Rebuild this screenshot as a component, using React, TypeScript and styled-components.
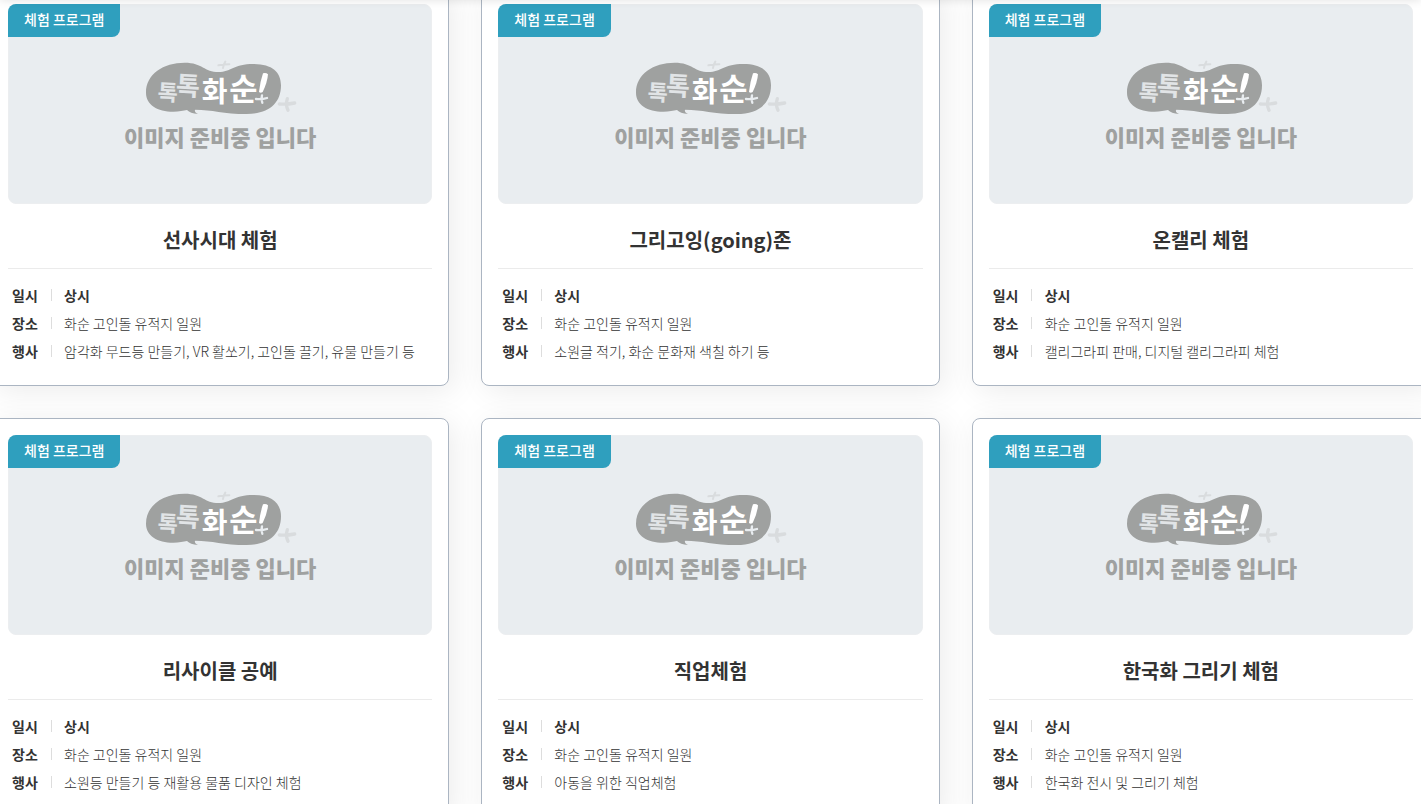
import React from "react";
import styled, { createGlobalStyle } from "styled-components";

const GlobalStyle = createGlobalStyle`
  *, *::before, *::after { box-sizing: border-box; }
  body {
    margin: 0;
    background: #fff;
    color: #333;
    font-family: "Noto Sans CJK KR", "Noto Sans", sans-serif;
    font-size: 14px;
    line-height: 28px;
  }
`;

const Page = styled.main`
  height: 100vh;
  overflow: hidden;
`;

const HeaderShadow = styled.div`
  position: fixed;
  top: -10px;
  left: 0;
  right: 0;
  height: 10px;
  box-shadow: 0 0 10px rgba(0, 0, 0, 0.12);
  z-index: 2;
`;

const CardGrid = styled.ul`
  display: grid;
  grid-template-columns: repeat(3, minmax(0, 1fr));
  gap: 32px;
  margin: -13px -9px 0;
  padding: 0;
  list-style: none;
`;

const Card = styled.li`
  padding: 16px;
  border: 1px solid #abb5c2;
  border-radius: 8px;
  background: #fff;
  box-shadow: 5px 5px 30px rgba(0, 0, 0, 0.08);
`;

const Thumbnail = styled.div`
  position: relative;
  display: flex;
  flex-direction: column;
  align-items: center;
  height: 200px;
  padding-top: 53px;
  border: 1px solid #eceef0;
  border-radius: 8px;
  background: #e9edf0;
`;

const Badge = styled.span`
  position: absolute;
  top: -1px;
  left: -1px;
  padding: 0 16px 2px;
  border-radius: 8px 0;
  background: #2f9fbe;
  color: #fff;
  font-weight: 500;
  line-height: 31px;
  white-space: nowrap;
`;

const Logo = styled.svg`
  display: block;
  width: 160px;
  height: 60px;
`;

const LogoText = styled.text`
  font-family: "Noto Sans CJK KR", sans-serif;
  font-weight: 700;
`;

const Notice = styled.p`
  margin: 2px 0 0;
  color: #9fa1a0;
  font-size: 22px;
  font-weight: 900;
  line-height: 32px;
  white-space: nowrap;
`;

const Title = styled.h2`
  margin: 0;
  padding: 20px 0 12px;
  border-bottom: 1px solid #ebebeb;
  font-size: 20px;
  font-weight: 700;
  line-height: 32px;
  text-align: center;
`;

const Details = styled.dl`
  margin: 0;
  padding: 12px 4px 4px;
`;

const Detail = styled.div`
  display: flex;
  align-items: center;
`;

const Term = styled.dt`
  display: flex;
  align-items: center;
  flex: none;
  width: 52px;
  font-weight: 700;

  &::after {
    content: "";
    width: 1px;
    height: 12px;
    margin-left: 13px;
    background: #ddd;
  }
`;

const Value = styled.dd<{ $strong?: boolean }>`
  margin: 0;
  color: #333;
  font-weight: ${(p) => (p.$strong ? 700 : 300)};
  white-space: nowrap;
`;

const programs = [
  { title: "선사시대 체험", event: "암각화 무드등 만들기, VR 활쏘기, 고인돌 끌기, 유물 만들기 등" },
  { title: "그리고잉(going)존", event: "소원글 적기, 화순 문화재 색칠 하기 등" },
  { title: "온캘리 체험", event: "캘리그라피 판매, 디지털 캘리그라피 체험" },
  { title: "리사이클 공예", event: "소원등 만들기 등 재활용 물품 디자인 체험" },
  { title: "직업체험", event: "아동을 위한 직업체험" },
  { title: "한국화 그리기 체험", event: "한국화 전시 및 그리기 체험" },
];

function PlaceholderLogo() {
  return (
    <Logo viewBox="90 24 480 180" role="img" aria-label="톡톡 화순!">
      <path
        d="M108 128C108 72 160 38 224 38C278 38 282 66 326 66C362 66 372 42 430 42C486 42 513 66 513 106C513 162 474 192 410 192C340 192 306 179 256 179C252 183 256 188 264 192C248 191 238 187 231 180C220 182 208 185 190 185C142 185 108 164 108 128Z"
        fill="#9fa1a0"
      />
      <g fill="none" stroke="#d9dcde" strokeLinecap="round">
        <path d="M325 46Q342 43 358 43M346 35Q340 44 339 54" strokeWidth="6" />
        <path d="M508 162Q530 164 554 159M532 146Q526 164 534 181" strokeWidth="10" />
      </g>
      <g fill="#e1e4e6">
        <LogoText x="143" y="152" fontSize="66" transform="rotate(3 175 130)">톡</LogoText>
        <LogoText x="198" y="136" fontSize="78" transform="rotate(3 235 110)">톡</LogoText>
      </g>
      <g fill="#fff">
        <LogoText x="275" y="157" fontSize="84">화</LogoText>
        <LogoText x="358" y="150" fontSize="92">순</LogoText>
      </g>
      <path d="M459 70Q468 67 474 73Q472 98 458 126Q452 130 447 126Q450 96 459 70Z" fill="#fff" />
      <path d="M438 147Q456 149 471 144M456 136Q452 148 457 158" fill="none" stroke="#e9edf0" strokeWidth="7" strokeLinecap="round" />
    </Logo>
  );
}

export default function App() {
  return (
    <>
      <GlobalStyle />
      <HeaderShadow />
      <Page>
        <CardGrid>
          {programs.map(({ title, event }) => (
            <Card key={title}>
              <Thumbnail>
                <Badge>체험 프로그램</Badge>
                <PlaceholderLogo />
                <Notice>이미지 준비중 입니다</Notice>
              </Thumbnail>
              <Title>{title}</Title>
              <Details>
                <Detail>
                  <Term>일시</Term>
                  <Value $strong>상시</Value>
                </Detail>
                <Detail>
                  <Term>장소</Term>
                  <Value>화순 고인돌 유적지 일원</Value>
                </Detail>
                <Detail>
                  <Term>행사</Term>
                  <Value>{event}</Value>
                </Detail>
              </Details>
            </Card>
          ))}
        </CardGrid>
      </Page>
    </>
  );
}
